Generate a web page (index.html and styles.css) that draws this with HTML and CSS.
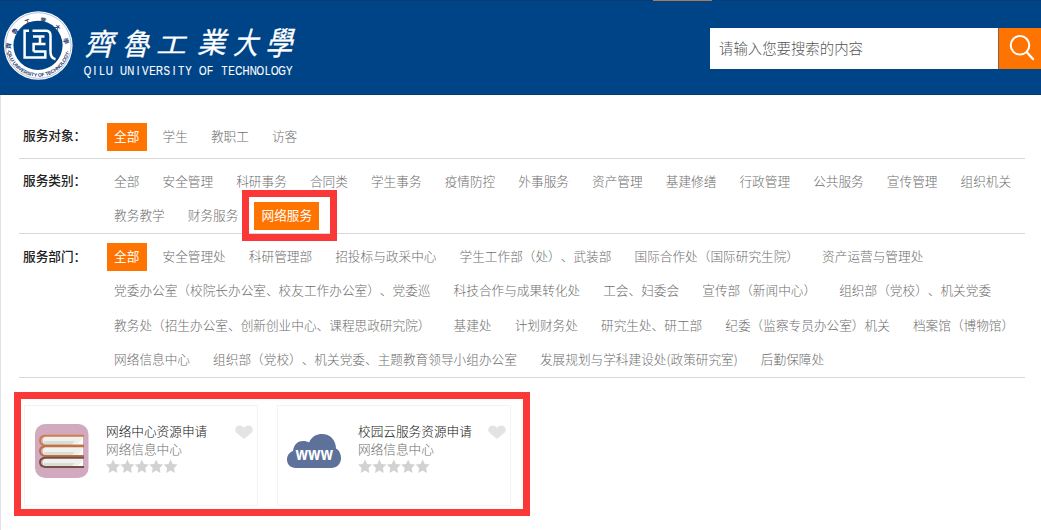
FILE: index.html
```html
<!DOCTYPE html>
<html lang="zh-CN">
<head>
<meta charset="utf-8">
<title>齐鲁工业大学</title>
<link rel="stylesheet" href="styles.css">
</head>
<body>
<header class="header">
  <svg class="logo" width="320" height="90" viewBox="0 0 320 90">
    <defs>
      <path id="arcTop" d="M10.8 49 A27 27 0 1 1 64.8 49"/>
      <path id="arcBottom" d="M7 50 A31.7 31.7 0 0 0 69.6 50"/>
    </defs>
    <circle cx="38.3" cy="45.5" r="34.3" fill="#fff"/>
    <circle cx="38.3" cy="45.5" r="32.8" fill="none" stroke="#8296c3" stroke-width=".6"/>
    <circle cx="38" cy="45.3" r="24.6" fill="#004488"/>
    <text class="seal-cn"><textPath href="#arcTop" textLength="80">齊魯工業大學</textPath></text>
    <text class="seal-en"><textPath href="#arcBottom" textLength="88">·QILU UNIVERSITY OF TECHNOLOGY·</textPath></text>
    <g fill="none" stroke="#fff" stroke-width="2.5">
      <path d="M29 30.700H24.600V57.500H45.300V51.500H33.600"/>
      <path d="M32.500 30.700H46.500Q50.500 31 50.500 36V52Q50.500 58 55.500 59.200"/>
      <path d="M33 36.500H44.500M40 36.500V44M33.600 51.500V44H45.500"/>
    </g>
    <g class="name-cn">
      <text transform="translate(84 55) skewX(-14)">齊</text>
      <text transform="translate(122 55) skewX(-14) scale(.9 1)">魯</text>
      <text transform="translate(156 53) skewX(-14) scale(1 .75)">工</text>
      <text transform="translate(197 53) skewX(-14) scale(.96)">業</text>
      <text transform="translate(233 54) skewX(-14) scale(.82 1)">大</text>
      <text transform="translate(265 55) skewX(-14) scale(.9 1.08)">學</text>
    </g>
    <g transform="translate(84 75) scale(.72 1)">
      <text class="name-en" x="5 15 25 35 45 55 65 75 85 95 105 115 125 135 145 155 165 175 185 195 205 215 225 235 245 255 265 275 285">QILU UNIVERSITY OF TECHNOLOGY</text>
    </g>
  </svg>
  <div class="nav-mark"></div>
  <div class="search">
    <div class="search-input">请输入您要搜索的内容</div>
    <div class="search-button">
      <svg width="42" height="41" viewBox="0 0 42 41" fill="none" stroke="#fff" stroke-linecap="round"><circle cx="20" cy="17.300" r="9.300" stroke-width="2"/><path d="M27 24.500L33 31" stroke-width="2.400"/></svg>
    </div>
  </div>
</header>
<main class="main">
  <section class="filter target">
    <h2>服务对象<span class="colon">：</span></h2>
    <div class="rows">
      <div class="row"><a class="on">全部</a><a>学生</a><a>教职工</a><a>访客</a></div>
    </div>
  </section>
  <section class="filter category">
    <h2>服务类别<span class="colon">：</span></h2>
    <div class="rows">
      <div class="row"><a>全部</a><a>安全管理</a><a>科研事务</a><a>合同类</a><a>学生事务</a><a>疫情防控</a><a>外事服务</a><a>资产管理</a><a>基建修缮</a><a>行政管理</a><a>公共服务</a><a>宣传管理</a><a>组织机关</a></div>
      <div class="row"><a>教务教学</a><a>财务服务</a><a class="on framed">网络服务</a></div>
    </div>
  </section>
  <section class="filter department">
    <h2>服务部门<span class="colon">：</span></h2>
    <div class="rows">
      <div class="row"><a class="on">全部</a><a>安全管理处</a><a>科研管理部</a><a>招投标与政采中心</a><a>学生工作部（处）、武装部</a><a>国际合作处（国际研究生院）</a><a>资产运营与管理处</a></div>
      <div class="row"><a>党委办公室（校院长办公室、校友工作办公室）、党委巡</a><a>科技合作与成果转化处</a><a>工会、妇委会</a><a>宣传部（新闻中心）</a><a>组织部（党校）、机关党委</a></div>
      <div class="row"><a>教务处（招生办公室、创新创业中心、课程思政研究院）</a><a>基建处</a><a>计划财务处</a><a>研究生处、研工部</a><a>纪委（监察专员办公室）机关</a><a>档案馆（博物馆）</a></div>
      <div class="row"><a>网络信息中心</a><a>组织部（党校）、机关党委、主题教育领导小组办公室</a><a>发展规划与学科建设处(政策研究室)</a><a>后勤保障处</a></div>
    </div>
  </section>
  <section class="cards">
    <article class="card">
      <svg class="icon" width="54" height="54" viewBox="0 0 54 54">
        <rect width="53.500" height="54" rx="10" fill="#d1aac0"/>
        <path fill="#f0f0ed" d="M48 12H10q-5 4 0 9H48zM48 23H10q-5 4 0 9H48zM48 34H10q-5 4 0 9H48z"/>
        <path fill="#dcdcd9" d="M9 17H40L36 21H9zM9 28H40L36 32H9zM9 39H40L36 43H9z"/>
        <path d="M38 21q8-1 10-8v8zM38 32q8-1 10-8v8zM38 43q8-1 10-8v8z" fill="#fff"/>
        <g fill="none" stroke-width="2"><path stroke="#d07e48" d="M49 11.800H10q-5 .5-5 4.800t5 4.900H49"/><path stroke="#bd7148" d="M49 22.200H10q-5 .5-5 4.800t5 4.900H49"/><path stroke="#765044" d="M49 33.700H10q-5 .5-5 4.600t5 4.600H49"/></g>
      </svg>
      <div class="info"><h3>网络中心资源申请</h3><p>网络信息中心</p>
        <svg class="stars" width="73" height="15" viewBox="0 0 73 15"><defs><path id="star" d="M7 .5l2.100 4.400 4.900.7-3.500 3.400.8 4.900L7 11.600l-4.300 2.300.8-4.900L0 5.600l4.900-.7z"/></defs><use href="#star"/><use href="#star" x="14.400"/><use href="#star" x="28.800"/><use href="#star" x="43.200"/><use href="#star" x="57.600"/></svg>
      </div>
      <svg class="heart" width="18" height="15" viewBox="0 0 18 15"><path d="M9 14L1.800 8C-.8 5.600 0 1 4.200.500 6.500.300 8 1.500 9 3 10 1.500 11.500.300 13.800.500 18 1 18.800 5.600 16.200 8z"/></svg>
    </article>
    <article class="card">
      <svg class="icon" width="54" height="54" viewBox="0 0 54 54"><path d="M9 44C3 44 0 40 0 35.500 0 31 3 28 6 27 7 20 11 17 16 17 19 17 20 17.500 22 18.500 25 12 30 10 35 10 43 10 49 16 49 24.500 52 26 54 30 54 34 54 40 50 44 44 44z" fill="#5e719b"/><text class="www" x="8.500" y="35.500" textLength="37.500" lengthAdjust="spacingAndGlyphs">www</text></svg>
      <div class="info"><h3>校园云服务资源申请</h3><p>网络信息中心</p>
        <svg class="stars" width="73" height="15" viewBox="0 0 73 15"><use href="#star"/><use href="#star" x="14.400"/><use href="#star" x="28.800"/><use href="#star" x="43.200"/><use href="#star" x="57.600"/></svg>
      </div>
      <svg class="heart" width="18" height="15" viewBox="0 0 18 15"><path d="M9 14L1.800 8C-.8 5.600 0 1 4.200.500 6.500.300 8 1.500 9 3 10 1.500 11.500.300 13.800.500 18 1 18.800 5.600 16.200 8z"/></svg>
    </article>
  </section>
</main>
</body>
</html>
```
FILE: styles.css
```css
* { box-sizing: border-box; }
body {
  margin: 0;
  width: 1041px;
  height: 530px;
  overflow: hidden;
  background: #fff;
  color: #6e6e6e;
  font: 300 12.66px "Noto Sans CJK SC", sans-serif;
  text-spacing-trim: space-all;
}
h2, h3, p { margin: 0; }
svg { display: block; }

.header {
  display: flex;
  justify-content: space-between;
  height: 95px;
  background: #004488;
  border-top: 1px solid #063b78;
  border-bottom: 1px solid #063a75;
}
.logo { margin-top: -1px; }
.seal-cn { font: 700 6px "Noto Sans CJK TC", sans-serif; fill: #26386b; }
.seal-en { font: 700 5px "Liberation Sans", sans-serif; fill: #26386b; }
.name-cn { font: 400 30px "Noto Sans CJK TC", sans-serif; fill: #fff; stroke: #fff; stroke-width: .3; }
.name-en { font: 13.5px "Liberation Sans", sans-serif; fill: #fff; stroke: #fff; stroke-width: .2; text-anchor: middle; }
.nav-mark { width: 59px; height: 1px; margin: -1px -2px 0 333px; background: #a97b51; }
.search { display: flex; width: 331px; height: 41px; margin-top: 27px; }
.search-input {
  width: 288px;
  padding-left: 9px;
  background: #fff;
  color: #555;
  font-size: 14.4px;
  line-height: 39px;
}
.search-button { width: 43px; padding-left: 1px; background: #ff7300; border-left: 1px solid #8a6248; }

.main { height: 435px; padding: 18px 16px 0 18px; border-left: 1px solid #dfe1e4; }
.filter { display: flex; border-bottom: 1px solid #d8d8d8; }
.filter h2 {
  width: 88px;
  flex: none;
  padding-left: 4px;
  color: #222;
  font-size: 12.66px;
  font-weight: 500;
  line-height: 34.4px;
  white-space: nowrap;
}
.colon { margin-left: -.2px; }
.rows { flex: 1; min-width: 0; }
.row { display: flex; align-items: center; gap: 8.9px; height: 34.3px; white-space: nowrap; }
.row a { height: 28px; padding: 0 7.1px; line-height: 26px; }
.row .on { background: #ff7300; color: #fff; font-weight: 400; }
.target { height: 46px; padding-top: 7px; }
.target h2 { margin-top: -2px; }
.category { height: 75px; padding-top: 6px; }
.category h2 { margin-top: -2px; }
.department { height: 144px; padding-top: 6px; }
.department h2 { margin-top: -1px; }
.framed { position: relative; }
.framed::after { content: ""; position: absolute; inset: -12px -18px -11px -12px; border: 7px solid #fb3838; }

.cards {
  display: flex;
  gap: 19px;
  width: 516px;
  height: 124px;
  margin: 14px 0 0 -5px;
  padding: 6px 0 0 3px;
  border: 7px solid #fb3838;
}
.card { display: flex; width: 234px; height: 101px; padding: 18px 4px 0 10px; border: 1px solid #f3f3f3; }
.card + .card { padding-left: 9px; }
.icon { flex: none; }
.www { font: 700 17px "Open Sans", sans-serif; fill: #fff; }
.info { width: 130px; padding-left: 17px; margin-top: -2px; white-space: nowrap; }
.info h3 { font-size: 12.66px; font-weight: 300; line-height: 17px; color: #111; }
.info p { line-height: 19px; }
.stars { fill: #d2d2d2; margin-top: 1px; }
.heart { flex: none; margin: 1px 0 0 auto; fill: #e3e3e3; }
```
